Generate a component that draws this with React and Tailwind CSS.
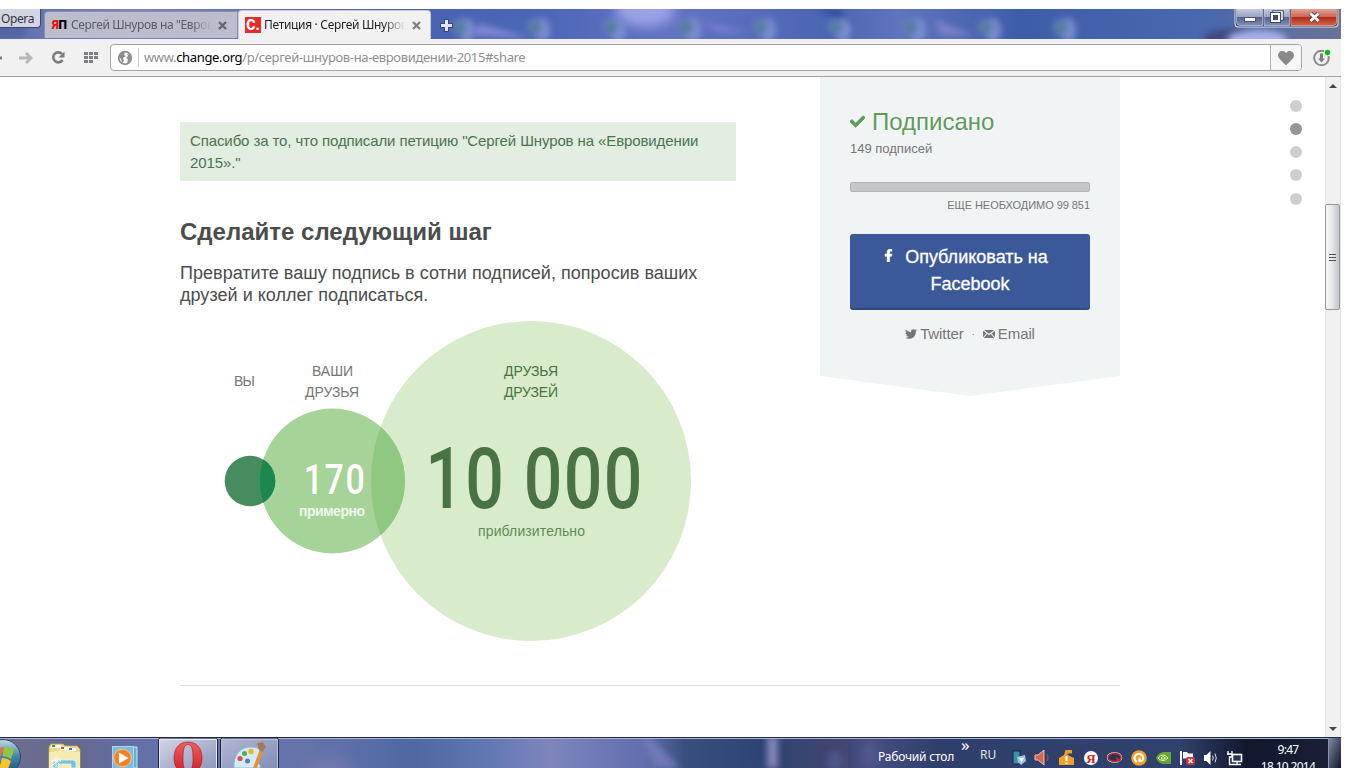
import React from 'react';
import { FaHeart, FaCheck, FaTwitter, FaFacebookF } from 'react-icons/fa';

const DESKTOP_ICONS = [467, 542, 618, 693, 768, 843, 918, 993, 1068];
const SECTIONS = ['top', 'share', 'about', 'letter', 'news'];

function TitleBackdrop() {
  return (
    <svg className="absolute inset-0" width="1341" height="30" viewBox="0 0 1341 30">
      <defs>
        <linearGradient id="sky" x1="0" x2="1" y1="0" y2="0">
          <stop offset="0" stopColor="#5e6fb0" />
          <stop offset="0.1" stopColor="#7f83b8" />
          <stop offset="0.3" stopColor="#4861b0" />
          <stop offset="0.4" stopColor="#4b66b8" />
          <stop offset="0.5" stopColor="#6473c2" />
          <stop offset="0.62" stopColor="#4a65b1" />
          <stop offset="0.67" stopColor="#5f75bd" />
          <stop offset="0.76" stopColor="#3e5da8" />
          <stop offset="0.9" stopColor="#4a68ae" />
          <stop offset="1" stopColor="#6b7396" />
        </linearGradient>
        <filter id="soft" x="-50%" y="-50%" width="200%" height="200%"><feGaussianBlur stdDeviation="3" /></filter>
        <filter id="softer" x="-50%" y="-50%" width="200%" height="200%"><feGaussianBlur stdDeviation="6" /></filter>
      </defs>
      <rect width="1341" height="30" fill="url(#sky)" />
      <ellipse cx="645" cy="2" rx="30" ry="16" fill="#9aa1e6" filter="url(#softer)" />
      <path d="M480 15L520 26L530 30L470 26Z" fill="#8288d4" filter="url(#soft)" />
      <path d="M700 12L750 24L720 24Z" fill="#7580ce" filter="url(#soft)" />
      <path d="M935 10L975 27L940 27Z" fill="#7880c8" filter="url(#soft)" />
      <path d="M815 0L850 15L840 0Z" fill="#334f9b" filter="url(#soft)" />
      <ellipse cx="1230" cy="29" rx="26" ry="9" fill="#3f4a80" filter="url(#soft)" />
      <ellipse cx="1257" cy="30" rx="30" ry="9" fill="#a5aeea" filter="url(#soft)" />
      <ellipse cx="10" cy="22" rx="18" ry="8" fill="#5365a4" filter="url(#soft)" />
      {DESKTOP_ICONS.map((x) => (
        <g key={x} filter="url(#soft)">
          <ellipse cx={x} cy="21" rx="8" ry="12" fill="#7b8dd2" />
          <ellipse cx={x - 7} cy="18" rx="8" ry="8" fill="#6584b8" />
          <circle cx={x - 7} cy="19" r="5" fill="#4f7d98" />
        </g>
      ))}
    </svg>
  );
}

function WindowButtons() {
  return (
    <svg className="absolute top-0 left-[1234px]" width="105" height="19" viewBox="0 0 105 19">
      <defs>
        <linearGradient id="btn" x1="0" x2="0" y1="0" y2="1">
          <stop offset="0" stopColor="#c3cbdf" />
          <stop offset="0.48" stopColor="#97a3c2" />
          <stop offset="0.5" stopColor="#52618e" />
          <stop offset="1" stopColor="#8090b8" />
        </linearGradient>
        <linearGradient id="btnClose" x1="0" x2="0" y1="0" y2="1">
          <stop offset="0" stopColor="#e0a193" />
          <stop offset="0.48" stopColor="#ce6755" />
          <stop offset="0.5" stopColor="#b02b16" />
          <stop offset="1" stopColor="#d2664a" />
        </linearGradient>
      </defs>
      <path d="M.5 0V14.500Q.5 18.500 4.500 18.500H100.500Q104.500 18.500 104.500 14.500V0Z" fill="#dce0ee" />
      <path d="M1.500 0V14Q1.500 17.500 5 17.500H100Q103.500 17.500 103.500 14V0Z" fill="#353b55" />
      <path d="M2.500 0V13Q2.500 16.500 6 16.500H28.500V0Z" fill="url(#btn)" stroke="#c6cde0" strokeWidth=".7" />
      <path d="M30 0H55.500V16.500H30Z" fill="url(#btn)" stroke="#c6cde0" strokeWidth=".7" />
      <path d="M57 0V16.500H99.500Q102.500 16.500 102.500 13.500V0Z" fill="url(#btnClose)" stroke="#e7b0a2" strokeWidth=".7" />
      <rect x="10.500" y="8.500" width="11" height="4" fill="#fff" stroke="#4d5571" />
      <rect x="40" y="3" width="8" height="7" fill="none" stroke="#454d69" strokeWidth="3.500" />
      <rect x="40" y="3" width="8" height="7" fill="none" stroke="#fff" strokeWidth="1.500" />
      <rect x="38" y="5" width="7" height="7" fill="none" stroke="#454d69" strokeWidth="4" />
      <rect x="38" y="5" width="7" height="7" fill="#454d69" stroke="#fff" strokeWidth="2" />
      <path d="M76.500 4.500L84.500 12M84.500 4.500L76.500 12" stroke="#5a4450" strokeWidth="4.600" />
      <path d="M76.500 4.500L84.500 12M84.500 4.500L76.500 12" stroke="#fff" strokeWidth="2.800" />
    </svg>
  );
}

function TabClose({ color }) {
  return (
    <svg className="ml-auto shrink-0" width="9" height="9" viewBox="0 0 9 9">
      <path d="M1 1L8 8M8 1L1 8" stroke={color} strokeWidth="2.300" />
    </svg>
  );
}

function TitleBar() {
  return (
    <div className="relative flex h-[30px] shrink-0 items-end border-b border-[#8a8da4] font-['Noto_Sans'] text-[12px]">
      <TitleBackdrop />
      <div className="relative mr-[3px] h-[19px] w-[41px] self-start rounded-br border-r border-b border-[#41495f] bg-[#d2d5e3] pl-[1px] leading-[20px] tracking-[-0.4px] text-[#32363f]">
        Opera
      </div>
      <div className="relative flex h-[27px] w-[194px] items-center rounded-tl border border-b-0 border-[#8b8fa8] bg-[#bbbdcc] pr-[10px] pl-[7px] text-[#595b66]">
        <span className="w-[19px] shrink-0 font-['Roboto'] text-[12px] leading-none font-black tracking-[-0.5px]">
          <span className="text-[#ee1111]">Я</span><span className="text-black">П</span>
        </span>
        <span className="w-[141px] shrink-0 overflow-hidden mask-r-from-85% tracking-[-0.37px] whitespace-nowrap">Сергей Шнуров на "Евровидении</span>
        <TabClose color="#62636b" />
      </div>
      <div className="relative -mb-px flex h-[29px] w-[193px] items-center rounded-t border border-b-0 border-[#c9cad6] bg-[#f1f1f1] pr-[9px] pl-[6px] text-[#222]">
        <span className="mr-[3px] flex h-4 w-4 shrink-0 items-center justify-center bg-[#e9292a] font-['Roboto'] text-[14px] leading-none font-black text-white">C.</span>
        <span className="w-[141px] shrink-0 overflow-hidden mask-r-from-85% tracking-[-0.32px] whitespace-nowrap">Петиция · Сергей Шнуров на</span>
        <TabClose color="#808080" />
      </div>
      <svg className="relative mb-[5px] ml-[8px]" width="15" height="15" viewBox="0 0 15 15">
        <path d="M7.500 1V14M1 7.500H14" stroke="#38487d" strokeWidth="5" />
        <path d="M7.500 2V13M2 7.500H13" stroke="#e2e6f4" strokeWidth="3" />
      </svg>
      <WindowButtons />
    </div>
  );
}

function Toolbar() {
  return (
    <div className="flex h-[38px] shrink-0 items-center border-b border-[#a3a3a3] bg-[#f1f1f1]">
      <svg width="110" height="36" viewBox="0 0 110 36">
        <path d="M0 18H2" stroke="#7d7d7d" strokeWidth="3" />
        <path d="M19 18H30M26 13L31 18L26 23" fill="none" stroke="#b6b6b6" strokeWidth="2.800" />
        <path d="M62 14A5 5 0 1 0 62.500 20" fill="none" stroke="#7a7c7e" strokeWidth="2.600" />
        <path d="M64.500 11.500V17.500H58.500Z" fill="#7a7c7e" />
        {[84, 89, 94].map((x) => (
          <g key={x} fill="#7d7f82">
            <rect x={x} y="12" width="4" height="3" />
            <rect x={x} y="16" width="4" height="3" />
            {x < 94 && <rect x={x} y="20" width="4" height="3" />}
          </g>
        ))}
      </svg>
      <div className="flex h-[27px] w-[1192px] items-center overflow-hidden rounded border border-[#a3a3a3] bg-white">
        <svg className="ml-[6px] shrink-0" width="16" height="16" viewBox="0 0 16 16">
          <circle cx="8" cy="8" r="6.300" fill="#fff" stroke="#8b8d8f" strokeWidth="1.800" />
          <path d="M3 3L8 2L7 5L9 6L6 8L7 11L5 13L4 9L2 7ZM10 4L13 5L14 8L12 12L10 13L11 9L9 8L11 6Z" fill="#8b8d8f" />
        </svg>
        <span className="mr-[5px] ml-[5px] h-[19px] w-px shrink-0 bg-[#c8c8c8]" />
        <span className="grow font-['Noto_Sans'] text-[13px] tracking-[-0.35px] whitespace-nowrap text-[#8e8e8e]">
          www.<span className="text-black">change.org</span>/p/сергей-шнуров-на-евровидении-2015#share
        </span>
        <span className="flex h-full w-[31px] items-center justify-center border-l border-[#b0b0b0] bg-[#f6f6f6]">
          <FaHeart size={16} className="text-[#8a8a8a]" />
        </span>
      </div>
      <svg className="ml-[10px]" width="20" height="20" viewBox="0 0 20 20">
        <circle cx="9.500" cy="10" r="7.300" fill="none" stroke="#8a8a8a" strokeWidth="2" />
        <path d="M8 5.500H11V10.500H13L9.500 14.500L6 10.500H8Z" fill="#7d7d7d" />
        <circle cx="15.500" cy="4.500" r="3.700" fill="#f1f1f1" />
        <circle cx="15.500" cy="4.500" r="2.700" fill="#0cba0c" />
      </svg>
    </div>
  );
}

function ReachDiagram() {
  return (
    <svg width="520" height="322" viewBox="180 320 520 322" className="font-['Liberation_Sans']" textAnchor="middle">
      <clipPath id="big"><circle cx="531" cy="481" r="160" /></clipPath>
      <clipPath id="mid"><circle cx="332.500" cy="481" r="72.500" /></clipPath>
      <circle cx="531" cy="481" r="160" fill="#d8ebca" />
      <circle cx="332.500" cy="481" r="72.500" fill="#a6d398" />
      <circle cx="332.500" cy="481" r="72.500" fill="#8fc981" clipPath="url(#big)" />
      <circle cx="250" cy="481" r="25.300" fill="#478c5e" />
      <circle cx="250" cy="481" r="25.300" fill="#1c874f" clipPath="url(#mid)" />
      <g fontSize="14" fill="#767676">
        <text x="244.500" y="386" textLength="21">ВЫ</text>
        <text x="332.500" y="376" textLength="41">ВАШИ</text>
        <text x="332" y="397" textLength="54">ДРУЗЬЯ</text>
      </g>
      <g fontSize="14" fill="#4a7345">
        <text x="531" y="376" textLength="54">ДРУЗЬЯ</text>
        <text x="531" y="397" textLength="54">ДРУЗЕЙ</text>
      </g>
      <text transform="translate(335 494) scale(.79 1)" className="font-['Roboto'] font-medium" fontSize="43" letterSpacing="2" fill="#fff">170</text>
      <text x="332" y="516" textLength="66" fontSize="14" fontWeight="bold" fill="#f0f8ed">примерно</text>
      <text transform="translate(534.500 507.500) scale(.79 1)" className="font-['Roboto'] font-medium" fontSize="86" letterSpacing="1.800" fill="#4a7345">10 000</text>
      <text x="531.500" y="536" textLength="107" fontSize="14" fill="#5f8c58">приблизительно</text>
    </svg>
  );
}

function PetitionCard() {
  return (
    <aside className="flex h-[319px] w-[300px] flex-col bg-[#f0f4f5] px-[30px] text-[#767676] [clip-path:polygon(0_0,100%_0,100%_299px,50%_319px,0_299px)]">
      <div className="mt-[30px] flex h-[30px] items-center text-[24px] text-[#5f9a5b]">
        <FaCheck size={15} className="mr-[7px] mb-[2px] stroke-[#5f9a5b] stroke-[30]" />
        <span className="[text-shadow:1px_1px_0_#fff]">Подписано</span>
      </div>
      <div className="mt-[2px] text-[13px] leading-[19px]">149 подписей</div>
      <div className="mt-[24px] h-[10px] rounded-[2px] border border-[#b0b4b4] bg-[#c4c7c8]" />
      <div className="mt-[5px] text-right text-[11px] leading-[16px] tracking-[-0.05px]">ЕЩЕ НЕОБХОДИМО 99 851</div>
      <button className="mt-[21px] h-[76px] rounded-[3px] border-b-2 border-[#2f4a80] bg-[#3b5998] pb-px text-center text-[18px] leading-[27px] text-white [-webkit-text-stroke:0.3px_white]">
        <span className="mr-[10px]">
          <FaFacebookF size={13} className="mr-[10px] inline stroke-white stroke-[20] align-[1px]" />
          Опубликовать на
        </span>
        <br />Facebook
      </button>
      <div className="mt-[13px] flex h-[22px] items-center justify-center text-[15px] tracking-[-0.1px]">
        <FaTwitter size={12} className="mr-[3px]" />
        Twitter
        <span className="mx-[8px] text-[10px]">·</span>
        <svg className="mr-[3px]" width="12" height="8" viewBox="0 0 12 8">
          <rect width="12" height="8" rx="1" fill="#767676" />
          <path d="M0 0L6 4.500L12 0M0 8L4 3.500M12 8L8 3.500" fill="none" stroke="#f0f4f5" strokeWidth="1.100" />
        </svg>
        Email
      </div>
    </aside>
  );
}

function Scrollbar() {
  return (
    <div className="flex w-4 flex-col items-center border-x border-[#e4e4e4] bg-[#f0f0f0]">
      <svg className="mt-[6px]" width="8" height="5" viewBox="0 0 8 5"><path d="M0 5L4 1L8 5Z" fill="#484848" /></svg>
      <div className="mt-[116px] mr-px -ml-px flex h-[106px] w-[15px] flex-col items-center justify-center gap-[2px] rounded-[2px] border border-[#979797] bg-linear-to-r from-[#f7f7f7] via-[#e4e5e7] to-[#c2c4c9]">
        <span className="h-px w-[7px] bg-[#555]" />
        <span className="h-px w-[7px] bg-[#555]" />
        <span className="h-px w-[7px] bg-[#555]" />
      </div>
      <svg className="mt-auto mb-[5px]" width="8" height="5" viewBox="0 0 8 5"><path d="M0 0L4 4L8 0Z" fill="#484848" /></svg>
    </div>
  );
}

function Page() {
  return (
    <div className="flex h-[660px] shrink-0 bg-white font-['Liberation_Sans']">
      <main className="ml-[180px] w-[940px]">
        <div className="flex h-[609px] justify-between border-b border-[#dfe1e1]">
          <div className="w-[556px] pt-[45px]">
            <p className="h-[59px] bg-[#e2eee0] px-[10px] pt-[8px] text-[15px] leading-[22px] tracking-[-0.11px] text-[#4c7350]">
              Спасибо за то, что подписали петицию "Сергей Шнуров на «Евровидении 2015»."
            </p>
            <h2 className="mt-[36px] text-[24px] leading-[30px] font-bold text-[#4a4d4c]">Сделайте следующий шаг</h2>
            <p className="mt-[15px] mb-[14px] text-[18px] leading-[22px] tracking-[0.03px] text-[#4a4d4c]">
              Превратите вашу подпись в сотни подписей, попросив ваших друзей и коллег подписаться.
            </p>
            <ReachDiagram />
          </div>
          <PetitionCard />
        </div>
      </main>
      <nav className="ml-[170px] flex w-3 flex-col gap-[11px] pt-[23px] *:last:mt-px">
        {SECTIONS.map((s) => (
          <span key={s} className={s === 'share' ? 'h-3 w-3 rounded-full bg-[#939798]' : 'h-3 w-3 rounded-full bg-[#cdcfcf]'} />
        ))}
      </nav>
      <div className="ml-auto flex"><Scrollbar /></div>
    </div>
  );
}

function TaskbarBackdrop() {
  return (
    <svg className="absolute inset-0" width="1341" height="31" viewBox="0 0 1341 31">
      <defs>
        <linearGradient id="glass" x1="0" x2="1" y1="0" y2="0">
          <stop offset="0" stopColor="#6e6e91" />
          <stop offset="0.06" stopColor="#66698f" />
          <stop offset="0.1" stopColor="#6570a8" />
          <stop offset="0.23" stopColor="#6574aa" />
          <stop offset="0.31" stopColor="#4e68a2" />
          <stop offset="0.36" stopColor="#6077b2" />
          <stop offset="0.41" stopColor="#7e85bb" />
          <stop offset="0.48" stopColor="#616fae" />
          <stop offset="0.51" stopColor="#39507f" />
          <stop offset="0.57" stopColor="#2d4373" />
          <stop offset="0.62" stopColor="#40446e" />
          <stop offset="0.65" stopColor="#454d80" />
          <stop offset="0.7" stopColor="#2f3f6c" />
          <stop offset="0.88" stopColor="#2f416c" />
          <stop offset="0.93" stopColor="#11182d" />
          <stop offset="1" stopColor="#1a2138" />
        </linearGradient>
      </defs>
      <rect width="1341" height="31" fill="url(#glass)" />
      <ellipse cx="330" cy="30" rx="22" ry="9" fill="#7378ae" filter="url(#softer)" />
      <rect x="767" y="0" width="11" height="31" fill="#8284b8" filter="url(#soft)" />
      <path d="M640 0H650L680 31H655Z" fill="#6f78b4" filter="url(#soft)" />
      <ellipse cx="835" cy="24" rx="8" ry="10" fill="#4d548a" filter="url(#soft)" />
      <ellipse cx="870" cy="18" rx="8" ry="14" fill="#555a8e" filter="url(#softer)" />
      <rect width="1341" height="1" fill="#1f2a45" />
      <rect y="1" width="1341" height="1" fill="#aab4d6" />
    </svg>
  );
}

function PinnedApps() {
  return (
    <svg className="absolute inset-0" width="290" height="31" viewBox="0 737 290 31">
      <defs>
        <linearGradient id="task" x1="0" x2="1" y1="0" y2="1">
          <stop offset="0" stopColor="#d4d7e6" />
          <stop offset="1" stopColor="#8a93b9" />
        </linearGradient>
        <linearGradient id="orb" x1="0" x2="0" y1="0" y2="1">
          <stop offset="0" stopColor="#c4dce9" />
          <stop offset="0.45" stopColor="#4c87a9" />
          <stop offset="1" stopColor="#12507a" />
        </linearGradient>
        <linearGradient id="opera" x1="0" x2="0" y1="0" y2="1">
          <stop offset="0" stopColor="#f0605c" />
          <stop offset="1" stopColor="#cf1d26" />
        </linearGradient>
      </defs>
      {/* start orb */}
      <circle cx="3" cy="757" r="17.500" fill="url(#orb)" stroke="#294965" />
      <path d="M5 746.500Q9 746 14 750L11 759Q7 756 2.500 756Z" fill="#8fc647" />
      <path d="M0 748Q2 747 4 747L1 756H0Z" fill="#ec7038" />
      <path d="M2 758Q6 757.500 11 761L8 769H-1Z" fill="#f6c52e" />
      <path d="M0 758H1L-1 768H0Z" fill="#4f9dd8" />
      {/* explorer */}
      <path d="M49 768V747L51 744H63L65 746H77L80 749V768Z" fill="#ecd98b" stroke="#c9ae50" strokeWidth=".7" />
      <rect x="51" y="745" width="10" height="3" fill="#fff" />
      <rect x="52" y="745" width="3" height="2" fill="#20a92c" />
      <rect x="60" y="747" width="10" height="3" fill="#fff" />
      <rect x="61" y="747" width="3" height="2" fill="#d85031" />
      <rect x="67" y="748" width="9" height="3" fill="#fff" />
      <rect x="69" y="748" width="3" height="2" fill="#2d7fd5" />
      <path d="M49 752L64 750L80 752V768H49Z" fill="#f6ebb1" />
      <path d="M53 768V763Q53 760 56 760H73Q76 760 76 763V768H71V764H58V768Z" fill="#74c3dd" stroke="#e0f5fa" strokeWidth=".8" />
      <path d="M56 756V767M51 761H61M53 758L60 765M60 758L53 765" stroke="#fff" strokeWidth=".9" />
      {/* media player */}
      <path d="M132 747H137V768H132Z" fill="#6aaed0" stroke="#cce8f4" />
      <rect x="112.500" y="746.500" width="21" height="23" fill="#7fbbdd" stroke="#a9d9ec" />
      <circle cx="122.500" cy="758" r="8.800" fill="#f18226" stroke="#ffc48c" />
      <path d="M119 752.500V763.500L128.500 758Z" fill="#fff" />
      {/* running tasks */}
      <rect x="158.500" y="738" width="59" height="33" rx="2" fill="url(#task)" stroke="#20263c" />
      <path d="M159.500 768V739.500H216.500V768" fill="none" stroke="#e6e8f4" />
      <rect x="220.500" y="738" width="58" height="33" rx="2" fill="url(#task)" fillOpacity=".7" stroke="#20263c" />
      <path d="M221.500 768V739.500H277.500V768" fill="none" stroke="#b9c0dc" />
      <path fillRule="evenodd" d="M188 742C178.500 742 174 749 174 758C174 767 178.500 773 188 773S202 767 202 758C202 749 197.500 742 188 742ZM188 744.500C192 744.500 193 750 193 758S192 771 188 771S183 766 183 758S184 744.500 188 744.500Z" fill="url(#opera)" stroke="#a31a23" strokeWidth=".6" />
      {/* paint */}
      <path d="M234 768C233 756 240 747 250 747C258 747 263 750 262 754C261 757 256 757 257 761C258 764 261 764 260 768Z" fill="#d5eaf7" stroke="#8dbbd8" />
      <circle cx="240" cy="758.500" r="2.600" fill="#dd4f45" />
      <circle cx="244.500" cy="753.500" r="2.500" fill="#4eae48" />
      <circle cx="251" cy="751.500" r="2.700" fill="#f0b32f" />
      <circle cx="247.500" cy="761" r="2.500" fill="#5f7fa8" />
      <path d="M260 749L263 751L257 768H253Z" fill="#e8922f" />
      <path d="M257 743L263 742L266 747L262 752L259 750Z" fill="#a77956" />
    </svg>
  );
}

function TrayIcons() {
  return (
    <svg width="236" height="22" viewBox="1010 747 236 22">
      <rect x="1013" y="751" width="7" height="13" fill="#3d8fa8" stroke="#15293d" />
      <path d="M1017 757L1025 755L1026 761L1021 765L1018 762Z" fill="#9fc3e6" />
      <path d="M1019 758H1024L1021.500 762Z" fill="#fff" />
      <path d="M1035 755H1038L1044 750V765L1038 760H1035Z" fill="#d9664a" stroke="#f0ddd5" strokeWidth=".8" />
      <path d="M1047 754Q1049 757.500 1047 761" fill="none" stroke="#9b4b3b" strokeWidth="1.200" />
      <path d="M1059 765V758L1064 755L1065.500 750H1072V753.500H1067.500V755L1074 758V765Z" fill="#f0a12a" />
      <path d="M1065.500 756H1067.500V761H1065.500ZM1065.500 762.500H1067.500V764H1065.500Z" fill="#fff" />
      <circle cx="1091" cy="758" r="7" fill="#fff" />
      <text x="1091" y="762.500" textAnchor="middle" className="font-['Liberation_Serif']" fontWeight="bold" fontSize="13" fill="#d21b1b">Я</text>
      <ellipse cx="1114.500" cy="757.500" rx="6.500" ry="4" fill="none" stroke="#eee" strokeWidth="2.500" />
      <ellipse cx="1114.500" cy="757.500" rx="6.500" ry="4" fill="#26335a" stroke="#c82828" strokeWidth="1.500" />
      <path d="M1116 758L1120.500 761.500" stroke="#c82828" strokeWidth="1.800" />
      <circle cx="1139" cy="758" r="7.800" fill="#f69d1d" />
      <path d="M1137 762A4.300 4.300 0 1 1 1142.500 760.500L1139.500 761V757.500" fill="none" stroke="#fff" strokeWidth="2.200" />
      <path d="M1163 752H1171V764H1163Q1158 763 1156 758Q1158 753 1163 752Z" fill="#6aa52b" />
      <path d="M1158 758Q1163 752 1168 758Q1163 763 1158 758ZM1161 758Q1163 755 1165.500 758Q1163 760.500 1161 758Z" fill="none" stroke="#e1f1cf" />
      <path d="M1181 751V765" stroke="#fff" strokeWidth="2" />
      <path d="M1183 752H1187L1188 753.500H1193V760H1188L1187 758.500H1183Z" fill="#fff" />
      <rect x="1186" y="757" width="9" height="8" rx="2" fill="#d83232" />
      <path d="M1188.500 759L1192.500 763M1192.500 759L1188.500 763" stroke="#fff" strokeWidth="1.500" />
      <path d="M1204 755H1206.500L1210.500 751V765L1206.500 761H1204Z" fill="#fff" />
      <path d="M1212.500 755.500Q1214 758 1212.500 760.500M1215 753.500Q1217.500 758 1215 762.500" fill="none" stroke="#dfe3ee" />
      <rect x="1232.500" y="754.500" width="9" height="7" fill="#26335a" stroke="#fff" strokeWidth="1.600" />
      <path d="M1233 764.500H1241M1237 762V764M1228 751V755M1232 751V755M1227 754H1232V757H1229.500V764.500H1233" fill="none" stroke="#fff" strokeWidth="1.300" />
    </svg>
  );
}

function Taskbar() {
  return (
    <div className="relative h-[31px] w-[1341px] shrink-0 overflow-hidden font-['Noto_Sans'] text-[12px] whitespace-nowrap text-white">
      <TaskbarBackdrop />
      <PinnedApps />
      <div className="relative flex h-full items-start pl-[878px]">
        <span className="mt-[11px] w-[83px] leading-[18px] tracking-[-0.2px]">Рабочий стол</span>
        <span className="text-[17px] leading-[16px]">»</span>
        <span className="mt-[9px] ml-auto w-[30px] leading-[18px] text-[#e0e3ea]">RU</span>
        <span className="mt-[10px]"><TrayIcons /></span>
        <span className="mt-[4px] w-[82px] pl-[2px] text-center leading-[17px] tracking-[-0.7px]">9:47<br />18.10.2014</span>
        <span className="mt-px h-[30px] w-[13px] border-l border-[#8992ac] bg-linear-to-br from-[#8089a4] to-[#141a2c]" />
      </div>
    </div>
  );
}

export default function App() {
  return (
    <div className="flex h-[768px] w-[1366px] flex-col overflow-hidden bg-white pt-[9px]">
      <div className="flex w-[1341px] flex-col">
        <TitleBar />
        <Toolbar />
        <Page />
      </div>
      <Taskbar />
    </div>
  );
}
